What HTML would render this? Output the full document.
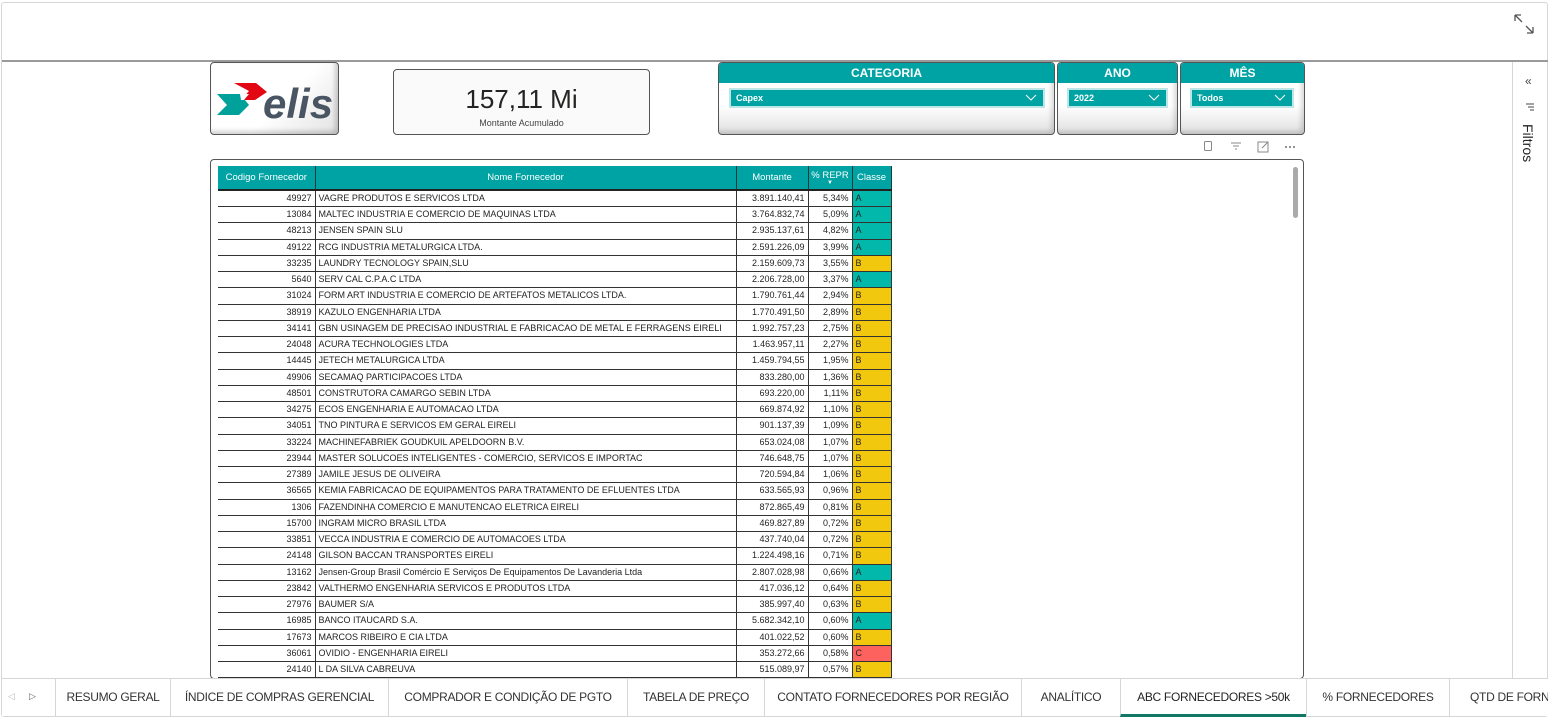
<!DOCTYPE html>
<html><head><meta charset="utf-8"><style>
*{box-sizing:border-box;margin:0;padding:0}
body{width:1550px;height:720px;background:#fff;font-family:"Liberation Sans",sans-serif;position:relative;overflow:hidden;color:#252423}
.abs{position:absolute}
.frame{left:1px;top:2px;width:1547px;height:715px;border:1px solid #d6d6d6;border-radius:3px}
.topline{left:2px;top:60px;width:1546px;height:2px;background:#9a9a9a}
.rpane{left:1512px;top:62px;width:1px;height:616px;background:#d6d6d6}
.card{border:1px solid #555;border-radius:4px}
.slicer{border:1px solid #555;border-radius:4px;background:linear-gradient(#fff 60%,#e0e0e0);box-shadow:inset -3px -3px 5px rgba(0,0,0,.15);overflow:hidden}
.slicer .h{background:#00a3a3;color:#fff;font-weight:bold;font-size:12px;text-align:center;height:20px;line-height:20px}
.dd{position:absolute;top:25px;height:20px;background:#00a3a3;border:2px solid #bfe6e6;color:#fff;font-weight:bold;font-size:9px;line-height:16px;padding-left:5px}
.dd svg{position:absolute;right:6px;top:4px}
table{border-collapse:collapse;font-size:9px;table-layout:fixed}
th{background:#00a3a3;color:#fff;font-weight:normal;font-size:9.5px;height:24px;border-right:1px solid #1a3a3a;border-bottom:2px solid #222}
td{height:16.25px;border-bottom:1px solid #333;border-right:1px solid #333;padding:0 3px;white-space:nowrap;overflow:hidden;line-height:15px}
td.r{text-align:right}
td.A{background:#01b8aa}td.B{background:#f2c80f}td.C{background:#fd625e}
.tabs{left:2px;top:678px;width:1546px;height:38px;border-top:1px solid #d6d6d6;background:#fff}
.tab{position:absolute;top:0;height:38px;line-height:37px;font-size:12px;letter-spacing:-0.3px;text-align:center;color:#333;border-left:1px solid #d6d6d6;white-space:nowrap;overflow:hidden}
</style></head><body>
<div class="abs frame"></div>
<div class="abs topline"></div>
<svg class="abs" style="left:1513px;top:13px" width="22" height="22" viewBox="0 0 22 22" fill="none" stroke="#555" stroke-width="1.3"><path d="M2 2l7 7M2 2v6M2 2h6M20 20l-7-7M20 20v-6M20 20h-6"/></svg>
<div class="abs rpane"></div>
<div class="abs" style="left:1525px;top:74px;font-size:12px;color:#444">«</div>
<svg class="abs" style="left:1526px;top:103px" width="8" height="8"><path d="M0 1h8M2 4h6M4 7h4" stroke="#444"/></svg>
<div class="abs" style="left:1520px;top:124px;font-size:14px;color:#252423;writing-mode:vertical-rl">Filtros</div>

<div class="abs card" style="left:210px;top:62px;width:129px;height:73px;background:linear-gradient(135deg,#fff 55%,#e2e2e2);box-shadow:inset -3px -3px 5px rgba(0,0,0,.18)">
<svg width="129" height="73" style="position:absolute;left:0;top:0">
<polygon points="23,20 45,20 56,29 44,37 30,37 38,28" fill="#e30613"/>
<polygon points="6,31 29,31 38,42 28,52 6,52 16,42" fill="#00a19a"/>
<polygon points="29,31 38,31 33,37 30,37" fill="#fff"/>
<text x="52" y="55" font-family="Liberation Sans" font-weight="bold" font-style="italic" font-size="42" fill="#4a5564">elis</text>
</svg></div>

<div class="abs card" style="left:393px;top:69px;width:257px;height:66px;background:#fafafa">
<div style="text-align:center;font-size:26px;margin-top:14px;color:#252423">157,11 Mi</div>
<div style="text-align:center;font-size:9px;margin-top:3px;color:#444">Montante Acumulado</div></div>

<div class="abs slicer" style="left:718px;top:62px;width:337px;height:73px"><div class="h">CATEGORIA</div>
<div class="dd" style="left:10px;width:316px">Capex<svg width="12" height="8"><path d="M1 1l5 5 5-5" stroke="#fff" fill="none"/></svg></div></div>
<div class="abs slicer" style="left:1057px;top:62px;width:121px;height:73px"><div class="h">ANO</div>
<div class="dd" style="left:9px;width:101px">2022<svg width="12" height="8"><path d="M1 1l5 5 5-5" stroke="#fff" fill="none"/></svg></div></div>
<div class="abs slicer" style="left:1180px;top:62px;width:125px;height:73px"><div class="h">MÊS</div>
<div class="dd" style="left:9px;width:104px">Todos<svg width="12" height="8"><path d="M1 1l5 5 5-5" stroke="#fff" fill="none"/></svg></div></div>

<svg class="abs" style="left:1200px;top:139px" width="105" height="16" fill="none" stroke="#888"><rect x="4.5" y="2.5" width="7" height="9" rx="1"/><path d="M31 4h10M33 7h6M35 10h2"/><path d="M58 3h10v10H58z M62 9l6-6M64 3h4v4"/><circle cx="86" cy="8" r=".6"/><circle cx="90" cy="8" r=".6"/><circle cx="94" cy="8" r=".6"/></svg>

<div class="abs card" style="left:210px;top:159px;width:1094px;height:520px;background:#fff;overflow:hidden">
<div class="abs" style="left:1082px;top:7px;width:5px;height:51px;background:#aaa;border-radius:3px"></div>
<table class="abs" style="left:7px;top:6px;width:673px">
<colgroup><col style="width:97px"><col style="width:421px"><col style="width:72px"><col style="width:44px"><col style="width:39px"></colgroup>
<tr><th>Codigo Fornecedor</th><th>Nome Fornecedor</th><th>Montante</th><th>% REPR<div style="font-size:6px;line-height:5px">▼</div></th><th>Classe</th></tr>
<tr><td class="r">49927</td><td>VAGRE PRODUTOS E SERVICOS LTDA</td><td class="r">3.891.140,41</td><td class="r">5,34%</td><td class="A">A</td></tr>
<tr><td class="r">13084</td><td>MALTEC INDUSTRIA E COMERCIO DE MAQUINAS LTDA</td><td class="r">3.764.832,74</td><td class="r">5,09%</td><td class="A">A</td></tr>
<tr><td class="r">48213</td><td>JENSEN SPAIN SLU</td><td class="r">2.935.137,61</td><td class="r">4,82%</td><td class="A">A</td></tr>
<tr><td class="r">49122</td><td>RCG INDUSTRIA METALURGICA LTDA.</td><td class="r">2.591.226,09</td><td class="r">3,99%</td><td class="A">A</td></tr>
<tr><td class="r">33235</td><td>LAUNDRY TECNOLOGY SPAIN,SLU</td><td class="r">2.159.609,73</td><td class="r">3,55%</td><td class="B">B</td></tr>
<tr><td class="r">5640</td><td>SERV CAL C.P.A.C LTDA</td><td class="r">2.206.728,00</td><td class="r">3,37%</td><td class="A">A</td></tr>
<tr><td class="r">31024</td><td>FORM ART INDUSTRIA E COMERCIO DE ARTEFATOS METALICOS LTDA.</td><td class="r">1.790.761,44</td><td class="r">2,94%</td><td class="B">B</td></tr>
<tr><td class="r">38919</td><td>KAZULO ENGENHARIA LTDA</td><td class="r">1.770.491,50</td><td class="r">2,89%</td><td class="B">B</td></tr>
<tr><td class="r">34141</td><td>GBN USINAGEM DE PRECISAO INDUSTRIAL E FABRICACAO DE METAL E FERRAGENS EIRELI</td><td class="r">1.992.757,23</td><td class="r">2,75%</td><td class="B">B</td></tr>
<tr><td class="r">24048</td><td>ACURA TECHNOLOGIES LTDA</td><td class="r">1.463.957,11</td><td class="r">2,27%</td><td class="B">B</td></tr>
<tr><td class="r">14445</td><td>JETECH METALURGICA LTDA</td><td class="r">1.459.794,55</td><td class="r">1,95%</td><td class="B">B</td></tr>
<tr><td class="r">49906</td><td>SECAMAQ PARTICIPACOES LTDA</td><td class="r">833.280,00</td><td class="r">1,36%</td><td class="B">B</td></tr>
<tr><td class="r">48501</td><td>CONSTRUTORA CAMARGO SEBIN LTDA</td><td class="r">693.220,00</td><td class="r">1,11%</td><td class="B">B</td></tr>
<tr><td class="r">34275</td><td>ECOS ENGENHARIA E AUTOMACAO LTDA</td><td class="r">669.874,92</td><td class="r">1,10%</td><td class="B">B</td></tr>
<tr><td class="r">34051</td><td>TNO PINTURA E SERVICOS EM GERAL EIRELI</td><td class="r">901.137,39</td><td class="r">1,09%</td><td class="B">B</td></tr>
<tr><td class="r">33224</td><td>MACHINEFABRIEK GOUDKUIL APELDOORN B.V.</td><td class="r">653.024,08</td><td class="r">1,07%</td><td class="B">B</td></tr>
<tr><td class="r">23944</td><td>MASTER SOLUCOES INTELIGENTES - COMERCIO, SERVICOS E IMPORTAC</td><td class="r">746.648,75</td><td class="r">1,07%</td><td class="B">B</td></tr>
<tr><td class="r">27389</td><td>JAMILE JESUS DE OLIVEIRA</td><td class="r">720.594,84</td><td class="r">1,06%</td><td class="B">B</td></tr>
<tr><td class="r">36565</td><td>KEMIA FABRICACAO DE EQUIPAMENTOS PARA TRATAMENTO DE EFLUENTES LTDA</td><td class="r">633.565,93</td><td class="r">0,96%</td><td class="B">B</td></tr>
<tr><td class="r">1306</td><td>FAZENDINHA COMERCIO E MANUTENCAO ELETRICA EIRELI</td><td class="r">872.865,49</td><td class="r">0,81%</td><td class="B">B</td></tr>
<tr><td class="r">15700</td><td>INGRAM MICRO BRASIL LTDA</td><td class="r">469.827,89</td><td class="r">0,72%</td><td class="B">B</td></tr>
<tr><td class="r">33851</td><td>VECCA INDUSTRIA E COMERCIO DE AUTOMACOES LTDA</td><td class="r">437.740,04</td><td class="r">0,72%</td><td class="B">B</td></tr>
<tr><td class="r">24148</td><td>GILSON BACCAN TRANSPORTES EIRELI</td><td class="r">1.224.498,16</td><td class="r">0,71%</td><td class="B">B</td></tr>
<tr><td class="r">13162</td><td>Jensen-Group Brasil Comércio E Serviços De Equipamentos De Lavanderia Ltda</td><td class="r">2.807.028,98</td><td class="r">0,66%</td><td class="A">A</td></tr>
<tr><td class="r">23842</td><td>VALTHERMO ENGENHARIA SERVICOS E PRODUTOS LTDA</td><td class="r">417.036,12</td><td class="r">0,64%</td><td class="B">B</td></tr>
<tr><td class="r">27976</td><td>BAUMER S/A</td><td class="r">385.997,40</td><td class="r">0,63%</td><td class="B">B</td></tr>
<tr><td class="r">16985</td><td>BANCO ITAUCARD S.A.</td><td class="r">5.682.342,10</td><td class="r">0,60%</td><td class="A">A</td></tr>
<tr><td class="r">17673</td><td>MARCOS RIBEIRO E CIA LTDA</td><td class="r">401.022,52</td><td class="r">0,60%</td><td class="B">B</td></tr>
<tr><td class="r">36061</td><td>OVIDIO - ENGENHARIA EIRELI</td><td class="r">353.272,66</td><td class="r">0,58%</td><td class="C">C</td></tr>
<tr><td class="r">24140</td><td>L DA SILVA CABREUVA</td><td class="r">515.089,97</td><td class="r">0,57%</td><td class="B">B</td></tr>
</table></div>

<div class="abs tabs">
<div class="abs" style="left:6px;top:12px;font-size:9px;color:#bbb">◁</div>
<div class="abs" style="left:27px;top:12px;font-size:9px;color:#666">▷</div>
<div class="tab" style="left:53px;width:115px">RESUMO GERAL</div>
<div class="tab" style="left:168px;width:218px">ÍNDICE DE COMPRAS GERENCIAL</div>
<div class="tab" style="left:386px;width:239px">COMPRADOR E CONDIÇÃO DE PGTO</div>
<div class="tab" style="left:625px;width:137px">TABELA DE PREÇO</div>
<div class="tab" style="left:762px;width:257px">CONTATO FORNECEDORES POR REGIÃO</div>
<div class="tab" style="left:1019px;width:99px">ANALÍTICO</div>
<div class="tab" style="left:1118px;width:186px;color:#252423;border-bottom:3px solid #117865">ABC FORNECEDORES &gt;50k</div>
<div class="tab" style="left:1304px;width:143px">% FORNECEDORES</div>
<div class="tab" style="left:1447px;width:99px;text-align:left;padding-left:20px">QTD DE FORNECEDORES</div>
</div>
</body></html>
